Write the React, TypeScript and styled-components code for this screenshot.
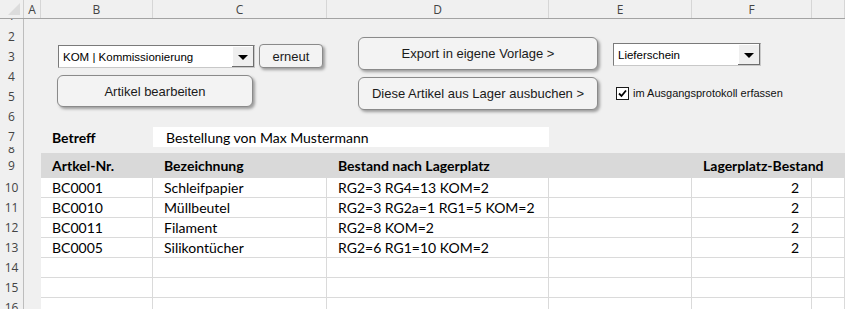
import React from 'react';
import styled, { createGlobalStyle } from 'styled-components';

const GlobalStyle = createGlobalStyle`
  html, body {
    margin: 0;
    padding: 0;
    background: #f0f0f0;
  }
  body {
    font-family: "Liberation Sans", Arial, sans-serif;
  }
`;

// column widths of the sheet (A..F), G takes the rest
const COLS = [
  { key: 'A', w: 17 },
  { key: 'B', w: 112 },
  { key: 'C', w: 174 },
  { key: 'D', w: 222 },
  { key: 'E', w: 143 },
  { key: 'F', w: 120 },
  { key: 'G', w: 0 },
];

const CELL_FONT = `Lato, "Liberation Sans", sans-serif`;

const Sheet = styled.div`
  position: relative;
  width: 845px;
  height: 309px;
  overflow: hidden;
  background: #f0f0f0;
`;

const HeaderBar = styled.div`
  display: flex;
  height: 19px;
  border-bottom: 1px solid #a3a3a3;
  box-sizing: border-box;
`;

const Corner = styled.div`
  position: relative;
  width: 24px;
  flex: none;
  border-right: 1px solid #d0d0d0;
  box-sizing: border-box;
  &::after {
    content: '';
    position: absolute;
    right: 3px;
    bottom: 3px;
    width: 0;
    height: 0;
    border-left: 12px solid transparent;
    border-bottom: 12px solid #dcdcdc;
  }
`;

const ColHead = styled.div<{ $w: number }>`
  ${(p) => (p.$w ? `width: ${p.$w}px; flex: none;` : 'flex: 1;')}
  display: flex;
  align-items: center;
  justify-content: center;
  border-right: 1px solid #d6d6d6;
  box-sizing: border-box;
  font-family: "Open Sans", "Liberation Sans", sans-serif;
  font-size: 12px;
  color: #444;
`;

const Row = styled.div<{ $h: number }>`
  display: flex;
  height: ${(p) => p.$h}px;
`;

const RowHead = styled.div<{ $shift?: number }>`
  width: 24px;
  flex: none;
  display: flex;
  align-items: center;
  justify-content: center;
  overflow: hidden;
  border-right: 1px solid #bdbdbd;
  box-sizing: border-box;
  font-family: "Open Sans", "Liberation Sans", sans-serif;
  font-size: 12px;
  color: #444;
  line-height: 14px;
  & > span {
    position: relative;
    top: ${(p) => p.$shift ?? 0}px;
  }
`;

type CellKind = 'blank' | 'subject' | 'head' | 'data';

const Cell = styled.div<{ $w: number; $kind: CellKind; $right?: boolean; $bold?: boolean }>`
  ${(p) => (p.$w ? `width: ${p.$w}px; flex: none;` : 'flex: 1;')}
  display: flex;
  align-items: center;
  justify-content: ${(p) => (p.$right ? 'flex-end' : 'flex-start')};
  padding: ${(p) => (p.$right ? '0 12px 0 0' : '0 0 0 11px')};
  box-sizing: border-box;
  white-space: nowrap;
  font-family: ${CELL_FONT};
  font-size: 14px;
  font-weight: ${(p) => (p.$bold ? 700 : 400)};
  color: #000;
  background: ${(p) =>
    p.$kind === 'head' ? '#d9d9d9' : p.$kind === 'data' ? '#fff' : 'transparent'};
  ${(p) =>
    p.$kind === 'data' &&
    `border-right: 1px solid #dadada; border-bottom: 1px solid #dadada;`}
`;

const SubjectField = styled.div<{ $w: number }>`
  width: ${(p) => p.$w}px;
  flex: none;
  display: flex;
  align-items: center;
  padding-left: 13px;
  box-sizing: border-box;
  background: #fff;
  font-family: ${CELL_FONT};
  font-size: 14px;
  color: #000;
`;

const Spacer = styled.div<{ $w: number }>`
  width: ${(p) => p.$w}px;
  flex: none;
`;

/* floating form controls lying over the sheet */
const Float = styled.div<{ $x: number; $y: number; $w: number; $h: number }>`
  position: absolute;
  left: ${(p) => p.$x}px;
  top: ${(p) => p.$y}px;
  width: ${(p) => p.$w}px;
  height: ${(p) => p.$h}px;
`;

const PushButton = styled.button<{ $radius: number }>`
  width: 100%;
  height: 100%;
  margin: 0;
  padding: 0;
  border: 1px solid #8a8a8a;
  border-radius: ${(p) => p.$radius}px;
  background: #f3f3f3;
  box-shadow: 2px 2px 3px rgba(0, 0, 0, 0.35);
  font-family: "Liberation Sans", Arial, sans-serif;
  font-size: 13px;
  color: #1a1a1a;
  cursor: default;
`;

const Combo = styled.div`
  display: flex;
  width: 100%;
  height: 100%;
  box-sizing: border-box;
  background: #fff;
  border: 1px solid #7a7a7a;
  border-right-color: #c8c8c8;
  border-bottom-color: #c8c8c8;
`;

const ComboText = styled.div`
  flex: 1;
  display: flex;
  align-items: center;
  padding-left: 4px;
  font-size: 11.5px;
  color: #000;
  white-space: nowrap;
`;

const ComboDrop = styled.div`
  width: 22px;
  flex: none;
  display: flex;
  align-items: center;
  justify-content: center;
  background: #efefef;
  border-left: 1px solid #fff;
  box-shadow: inset -1px -1px 0 #6e6e6e, inset 1px 1px 0 #fff;
  &::after {
    content: '';
    width: 0;
    height: 0;
    margin-top: 1px;
    border-left: 5px solid transparent;
    border-right: 5px solid transparent;
    border-top: 5px solid #000;
  }
`;

const CheckRow = styled.label`
  display: flex;
  align-items: center;
  gap: 4px;
  height: 100%;
  font-size: 11px;
  color: #111;
  white-space: nowrap;
`;

const CheckBox = styled.span`
  width: 13px;
  height: 13px;
  flex: none;
  box-sizing: border-box;
  border: 1px solid #1a1a1a;
  background: #fff;
  display: flex;
  align-items: center;
  justify-content: center;
`;

const data = [
  ['BC0001', 'Schleifpapier', 'RG2=3 RG4=13 KOM=2', '2'],
  ['BC0010', 'Müllbeutel', 'RG2=3 RG2a=1 RG1=5 KOM=2', '2'],
  ['BC0011', 'Filament', 'RG2=8 KOM=2', '2'],
  ['BC0005', 'Silikontücher', 'RG2=6 RG1=10 KOM=2', '2'],
];

const blankRow = (n: number, h: number) => (
  <Row $h={h} key={n}>
    <RowHead>
      <span>{n}</span>
    </RowHead>
  </Row>
);

const dataRow = (n: number, r: string[]) => (
  <Row $h={20} key={n}>
    <RowHead>
      <span>{n}</span>
    </RowHead>
    <Spacer $w={COLS[0].w} />
    <Cell $w={COLS[1].w} $kind="data">{r[0]}</Cell>
    <Cell $w={COLS[2].w} $kind="data">{r[1]}</Cell>
    <Cell $w={COLS[3].w} $kind="data">{r[2]}</Cell>
    <Cell $w={COLS[4].w} $kind="data" />
    <Cell $w={COLS[5].w} $kind="data" $right>{r[3]}</Cell>
    <Cell $w={0} $kind="data" />
  </Row>
);

const App: React.FC = () => {
  const rows: React.ReactNode[] = [];
  rows.push(
    <Row $h={8} key={1}>
      <RowHead $shift={-7}>
        <span>1</span>
      </RowHead>
    </Row>
  );
  for (let n = 2; n <= 6; n++) rows.push(blankRow(n, 20));
  rows.push(
    <Row $h={20} key={7}>
      <RowHead>
        <span>7</span>
      </RowHead>
      <Spacer $w={COLS[0].w} />
      <Cell $w={COLS[1].w} $kind="subject" $bold>Betreff</Cell>
      <SubjectField $w={COLS[2].w + COLS[3].w}>Bestellung von Max Mustermann</SubjectField>
    </Row>
  );
  rows.push(
    <Row $h={6} key={8}>
      <RowHead $shift={-1}>
        <span>8</span>
      </RowHead>
    </Row>
  );
  rows.push(
    <Row $h={25} key={9}>
      <RowHead>
        <span>9</span>
      </RowHead>
      <Spacer $w={COLS[0].w} />
      <Cell $w={COLS[1].w} $kind="head" $bold>Artkel-Nr.</Cell>
      <Cell $w={COLS[2].w} $kind="head" $bold>Bezeichnung</Cell>
      <Cell $w={COLS[3].w} $kind="head" $bold>Bestand nach Lagerplatz</Cell>
      <Cell $w={COLS[4].w} $kind="head" />
      <Cell $w={0} $kind="head" $bold>Lagerplatz-Bestand</Cell>
    </Row>
  );
  data.forEach((r, i) => rows.push(dataRow(10 + i, r)));
  for (let n = 14; n <= 16; n++) rows.push(dataRow(n, ['', '', '', '']));

  return (
    <>
      <GlobalStyle />
      <Sheet>
        <HeaderBar>
          <Corner />
          {COLS.map((c) => (
            <ColHead key={c.key} $w={c.w}>
              {c.key === 'G' ? '' : c.key}
            </ColHead>
          ))}
        </HeaderBar>
        {rows}

        <Float $x={58} $y={45} $w={197} $h={23}>
          <Combo>
            <ComboText>KOM | Kommissionierung</ComboText>
            <ComboDrop />
          </Combo>
        </Float>
        <Float $x={259} $y={44} $w={64} $h={24}>
          <PushButton $radius={4}>erneut</PushButton>
        </Float>
        <Float $x={57} $y={75} $w={196} $h={32}>
          <PushButton $radius={6}>Artikel bearbeiten</PushButton>
        </Float>
        <Float $x={358} $y={37} $w={240} $h={33}>
          <PushButton $radius={6}>Export in eigene Vorlage &gt;</PushButton>
        </Float>
        <Float $x={358} $y={77} $w={240} $h={33}>
          <PushButton $radius={6}>Diese Artikel aus Lager ausbuchen &gt;</PushButton>
        </Float>
        <Float $x={613} $y={43} $w={148} $h={23}>
          <Combo>
            <ComboText>Lieferschein</ComboText>
            <ComboDrop />
          </Combo>
        </Float>
        <Float $x={616} $y={84} $w={180} $h={18}>
          <CheckRow>
            <CheckBox>
              <svg width="11" height="11" viewBox="0 0 11 11">
                <path d="M2 5.5 L4.5 8 L9 2.5" fill="none" stroke="#000" strokeWidth="1.8" />
              </svg>
            </CheckBox>
            im Ausgangsprotokoll erfassen
          </CheckRow>
        </Float>
      </Sheet>
    </>
  );
};

export default App;
